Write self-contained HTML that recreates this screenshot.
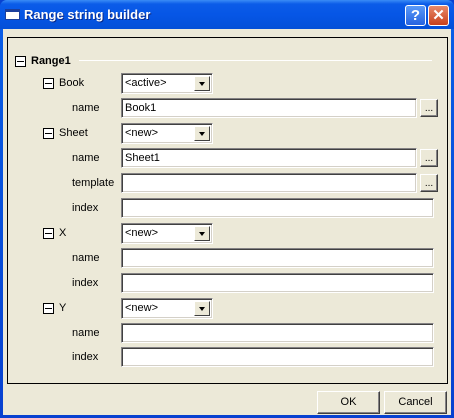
<!DOCTYPE html><html><head><style>
*{margin:0;padding:0;box-sizing:border-box}
body{width:454px;height:418px;overflow:hidden;font-family:"Liberation Sans",Arial,sans-serif;font-size:11px;color:#000;background:#0841d0}
.win{position:absolute;left:0;top:0;width:454px;height:418px;background:linear-gradient(#0a5fe8,#0841d0);border-radius:7px 7px 0 0}
.tb{position:absolute;left:0;top:0;width:454px;height:29px;background:linear-gradient(#3a8cf6 0,#0b5ce8 4px,#0656e6 50%,#0350d8 100%);border-radius:7px 7px 0 0}
.title{position:absolute;left:24px;top:7px;color:#fff;font-weight:bold;font-size:13px;text-shadow:1px 1px #0a2a8a}
.ico{position:absolute;left:5px;top:9px;width:15px;height:11px;background:#fff;border:1px solid #1b3e9c;border-top:3px solid #1b3e9c}
.body{position:absolute;left:3px;top:29px;width:448px;height:386px;background:#ece9d8}
.tbtn{position:absolute;top:5px;width:21px;height:21px;border:1px solid #fff;border-radius:3px;color:#fff;font-weight:bold;text-align:center;line-height:19px;font-size:15px}
.panel{position:absolute;left:7px;top:37px;width:441px;height:347px;border:1px solid #000}
.abs{position:absolute}
.lbl{position:absolute;line-height:14px}
.box{position:absolute;width:11px;height:11px;border:1px solid #000;background:#fff}
.box:after{content:"";position:absolute;left:1px;top:4px;width:7px;height:1px;background:#000}
.in{position:absolute;left:121px;height:20px;background:#fff;border:1px solid;border-color:#848284 #fff #fff #848284;box-shadow:inset 1px 1px #404040,inset -1px -1px #d4d0c8;padding:3px 0 0 3px;line-height:13px}
.cb{position:absolute;left:121px;width:92px;height:21px;background:#fff;border:1px solid;border-color:#848284 #fff #fff #848284;box-shadow:inset 1px 1px #404040,inset -1px -1px #d4d0c8;padding:3px 0 0 3px;line-height:13px}
.cb i{position:absolute;right:2px;top:2px;width:16px;height:15px;background:#ece9d8;border:1px solid;border-color:#fff #404040 #404040 #fff}
.cb i:after{content:"";position:absolute;left:4px;top:5px;border:3.5px solid transparent;border-top:4px solid #000;border-bottom:0}
.db{position:absolute;left:420px;width:18px;height:18px;background:#ece9d8;border:1px solid;border-color:#fff #404040 #404040 #fff;box-shadow:inset -1px -1px #848284;font-size:10px;text-align:center;line-height:18px}
.btn{position:absolute;top:391px;width:63px;height:23px;background:#ece9d8;border:1px solid;border-color:#fff #404040 #404040 #fff;box-shadow:inset -1px -1px #848284;text-align:center;line-height:21px}
</style></head><body>
<div class="win"><div class="tb"><div class="ico"></div><div class="title">Range string builder</div>
<div class="tbtn" style="left:405px;background:linear-gradient(#5a9af8,#2663e0)">?</div>
<div class="tbtn" style="left:428px;background:linear-gradient(#e88a6a,#c8401c)">✕</div></div>
<div class="body"></div>
<div class="panel"></div>
<div class="box" style="left:15px;top:56px"></div><div class="lbl" style="left:31px;top:54px;font-weight:bold">Range1</div>
<div class="abs" style="left:79px;top:60px;width:353px;height:1px;background:#aca899;border-bottom:1px solid #fff"></div>

<div class="box" style="left:43px;top:78px"></div><div class="lbl" style="left:59px;top:76px">Book</div>
<div class="cb" style="top:73px">&lt;active&gt;<i></i></div>
<div class="lbl" style="left:72px;top:101px">name</div><div class="in" style="top:98px;width:296px">Book1</div><div class="db" style="top:99px">...</div>

<div class="box" style="left:43px;top:128px"></div><div class="lbl" style="left:59px;top:126px">Sheet</div>
<div class="cb" style="top:123px">&lt;new&gt;<i></i></div>
<div class="lbl" style="left:72px;top:151px">name</div><div class="in" style="top:148px;width:296px">Sheet1</div><div class="db" style="top:149px">...</div>
<div class="lbl" style="left:72px;top:176px">template</div><div class="in" style="top:173px;width:296px"></div><div class="db" style="top:174px">...</div>
<div class="lbl" style="left:72px;top:201px">index</div><div class="in" style="top:198px;width:313px"></div>

<div class="box" style="left:43px;top:228px"></div><div class="lbl" style="left:59px;top:226px">X</div>
<div class="cb" style="top:223px">&lt;new&gt;<i></i></div>
<div class="lbl" style="left:72px;top:251px">name</div><div class="in" style="top:248px;width:313px"></div>
<div class="lbl" style="left:72px;top:276px">index</div><div class="in" style="top:273px;width:313px"></div>

<div class="box" style="left:43px;top:303px"></div><div class="lbl" style="left:59px;top:301px">Y</div>
<div class="cb" style="top:298px">&lt;new&gt;<i></i></div>
<div class="lbl" style="left:72px;top:326px">name</div><div class="in" style="top:323px;width:313px"></div>
<div class="lbl" style="left:72px;top:350px">index</div><div class="in" style="top:347px;width:313px"></div>

<div class="btn" style="left:317px">OK</div><div class="btn" style="left:384px">Cancel</div>
</div>
</body></html>
